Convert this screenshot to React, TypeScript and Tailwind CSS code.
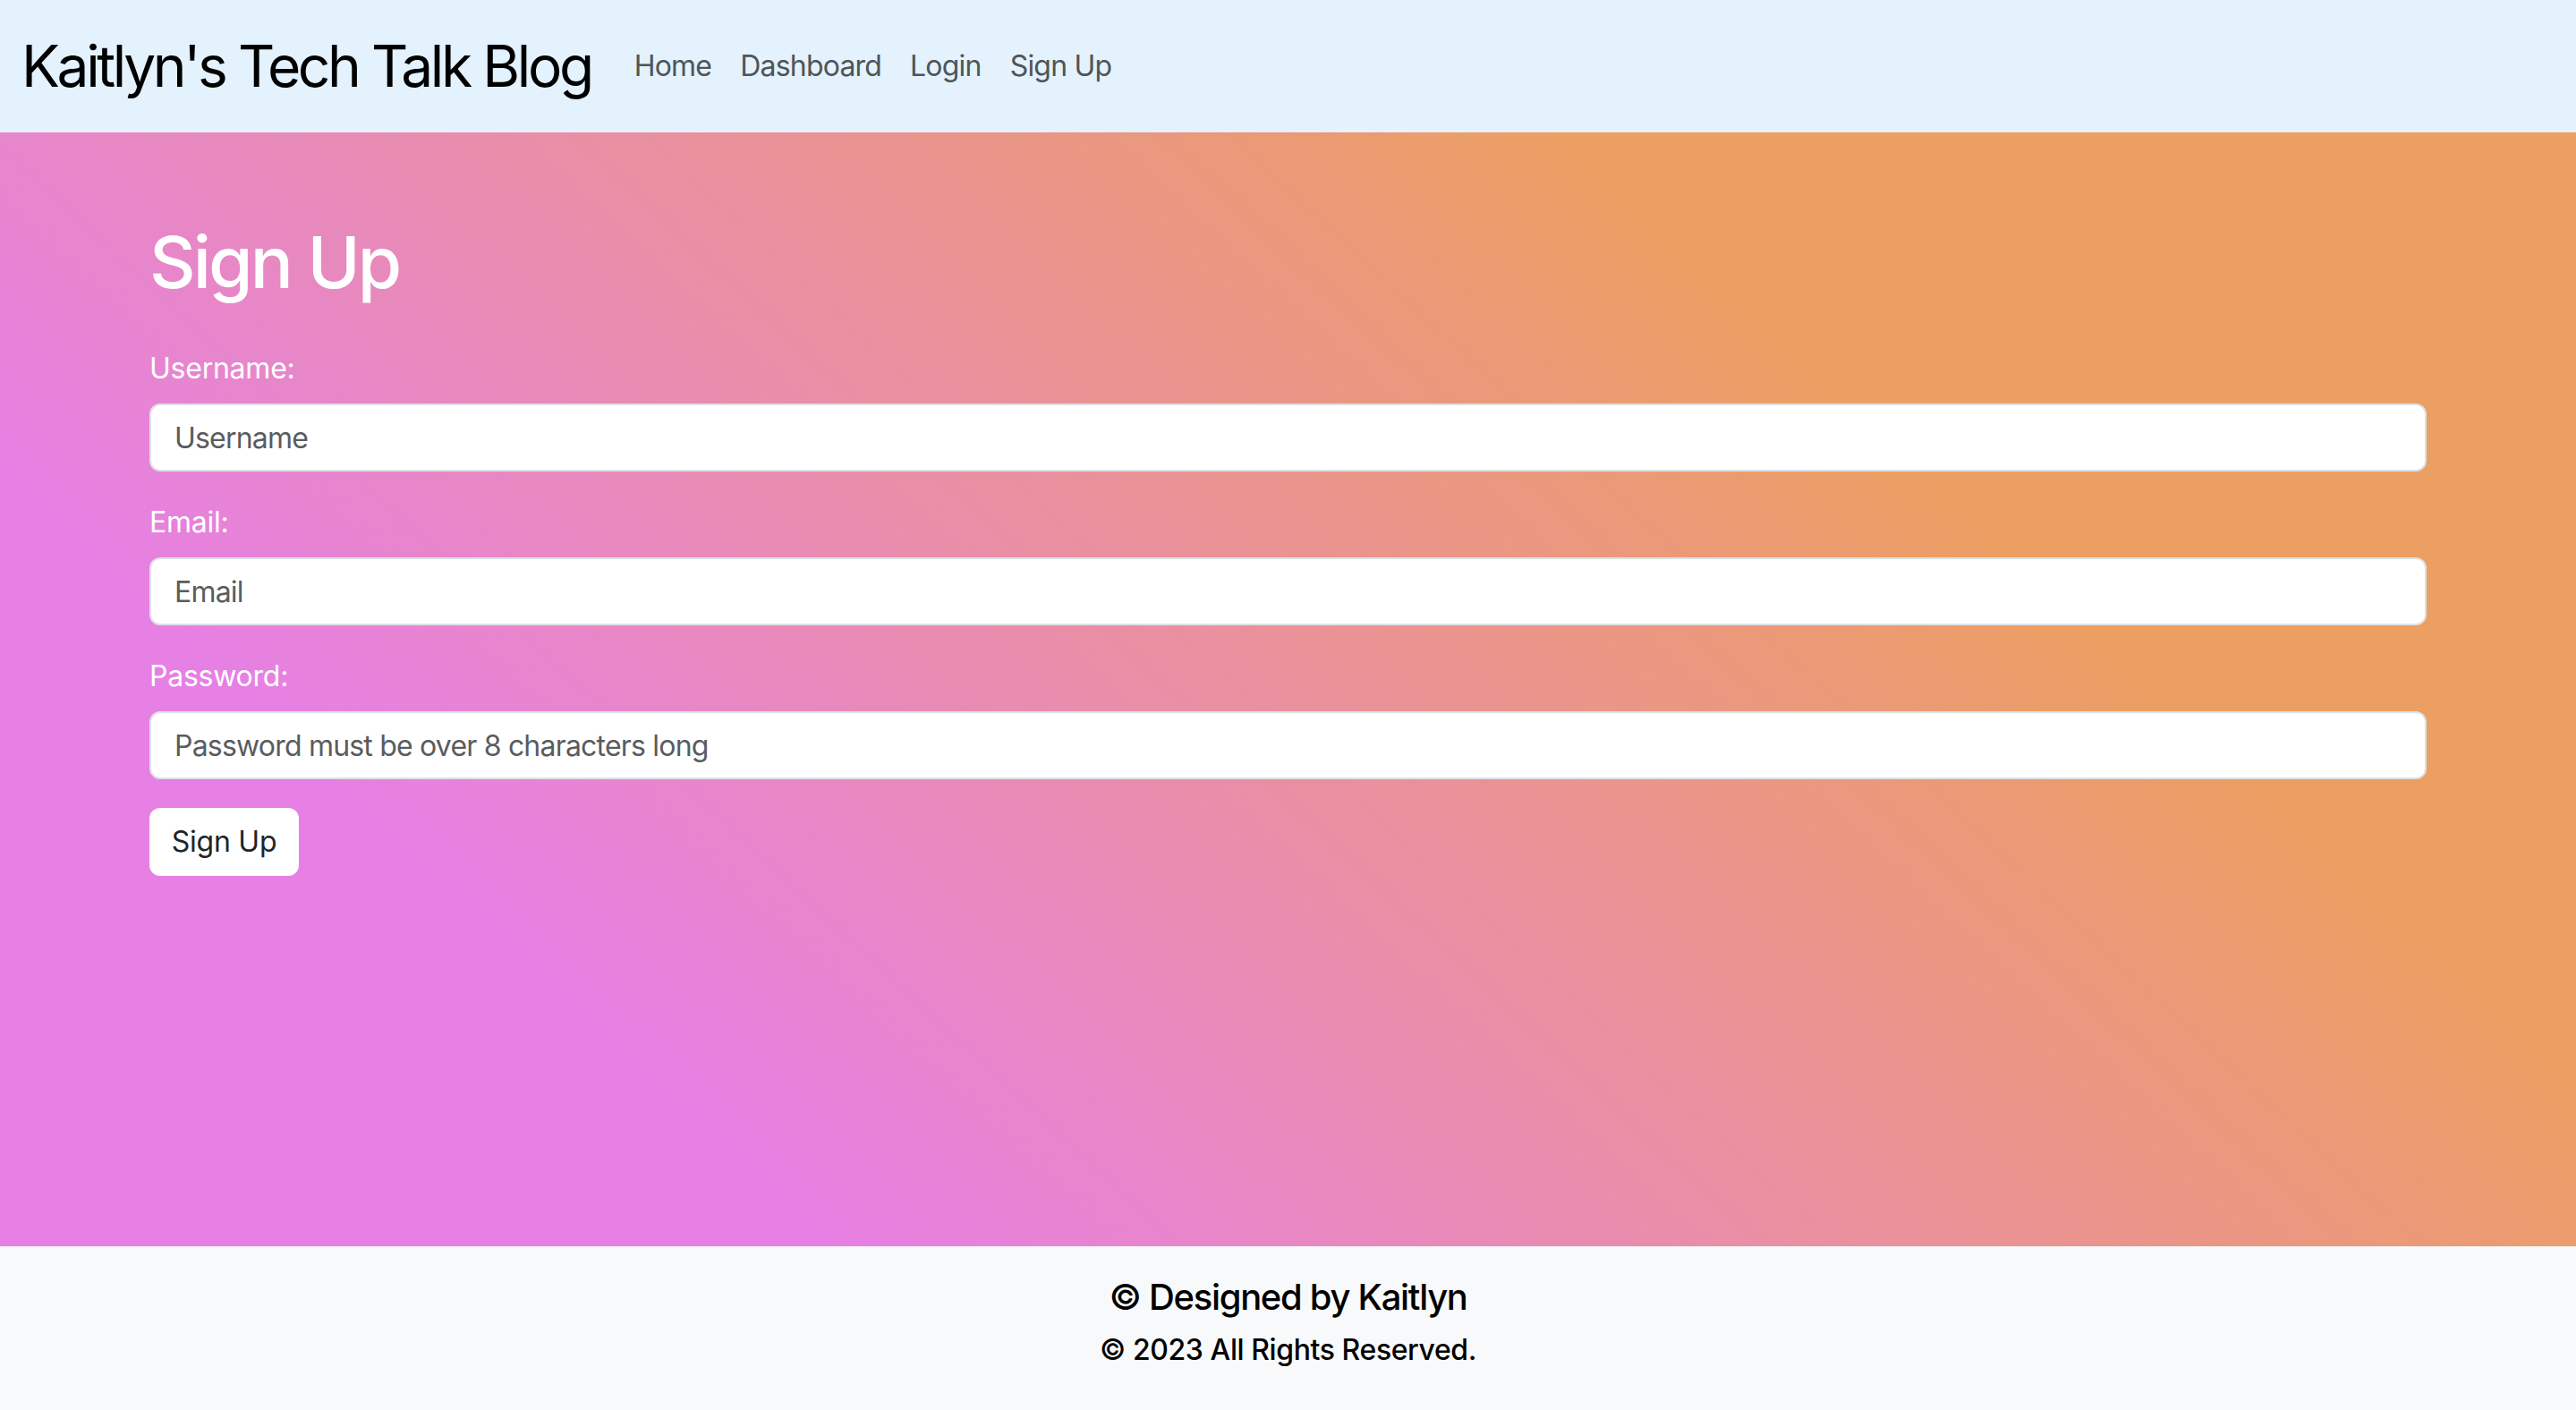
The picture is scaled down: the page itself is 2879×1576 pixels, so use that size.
export default function App() {
  return (
    <div className="flex min-h-screen flex-col font-['Inter',sans-serif]">
      <nav className="flex h-[148px] items-center bg-[#e3f2fd] px-[24px]">
        <a href="#" className="mr-[32px] text-[64px] leading-[96px] tracking-[-0.053em] text-black">
          Kaitlyn's Tech Talk Blog
        </a>
        <ul className="flex items-center">
          {["Home", "Dashboard", "Login", "Sign Up"].map((item) => (
            <li key={item}>
              <a href="#" className="block px-[16px] text-[32px] leading-[48px] tracking-[-0.025em] text-[#4f5558]">
                {item}
              </a>
            </li>
          ))}
        </ul>
      </nav>

      <main className="h-[1245px] bg-[linear-gradient(43deg,#e680e4_22%,#eb9f62_73%)] px-[167px] pt-[97px]">
        <h1 className="mb-[46px] text-[80px] font-medium leading-[96px] tracking-[-0.036em] text-white">Sign Up</h1>
        <form className="tracking-[-0.015em]">
          <div className="mb-[32px]">
            <label className="mb-[16px] block pt-[1px] text-[32px] leading-[47px] text-white">Username:</label>
            <input
              type="text"
              placeholder="Username"
              className="h-[76px] w-full rounded-[12px] border-2 border-[#dee2e6] bg-white px-[26px] text-[32px] tracking-[-0.025em] text-[#212529] outline-none placeholder:text-[#595c5f]"
            />
          </div>
          <div className="mb-[32px]">
            <label className="mb-[16px] block pt-[1px] text-[32px] leading-[47px] text-white">Email:</label>
            <input
              type="email"
              placeholder="Email"
              className="h-[76px] w-full rounded-[12px] border-2 border-[#dee2e6] bg-white px-[26px] text-[32px] tracking-[-0.025em] text-[#212529] outline-none placeholder:text-[#595c5f]"
            />
          </div>
          <div className="mb-[32px]">
            <label className="mb-[16px] block pt-[1px] text-[32px] leading-[47px] text-white">Password:</label>
            <input
              type="password"
              placeholder="Password must be over 8 characters long"
              className="h-[76px] w-full rounded-[12px] border-2 border-[#dee2e6] bg-white px-[26px] text-[32px] tracking-[-0.025em] text-[#212529] outline-none placeholder:text-[#595c5f]"
            />
          </div>
          <button
            type="button"
            className="flex h-[76px] w-[167px] items-center justify-center rounded-[12px] bg-white text-[32px] text-[#212529]"
          >
            Sign Up
          </button>
        </form>
      </main>

      <footer className="flex h-[183px] flex-col items-center bg-[#f8f9fa] pt-[33px] text-black">
        <h5 className="mb-[11px] text-[40px] font-medium leading-[48px] tracking-[-0.033em]">© Designed by Kaitlyn</h5>
        <p className="text-[32px] font-medium leading-[48px] tracking-[-0.013em]">© 2023 All Rights Reserved.</p>
      </footer>
    </div>
  );
}
